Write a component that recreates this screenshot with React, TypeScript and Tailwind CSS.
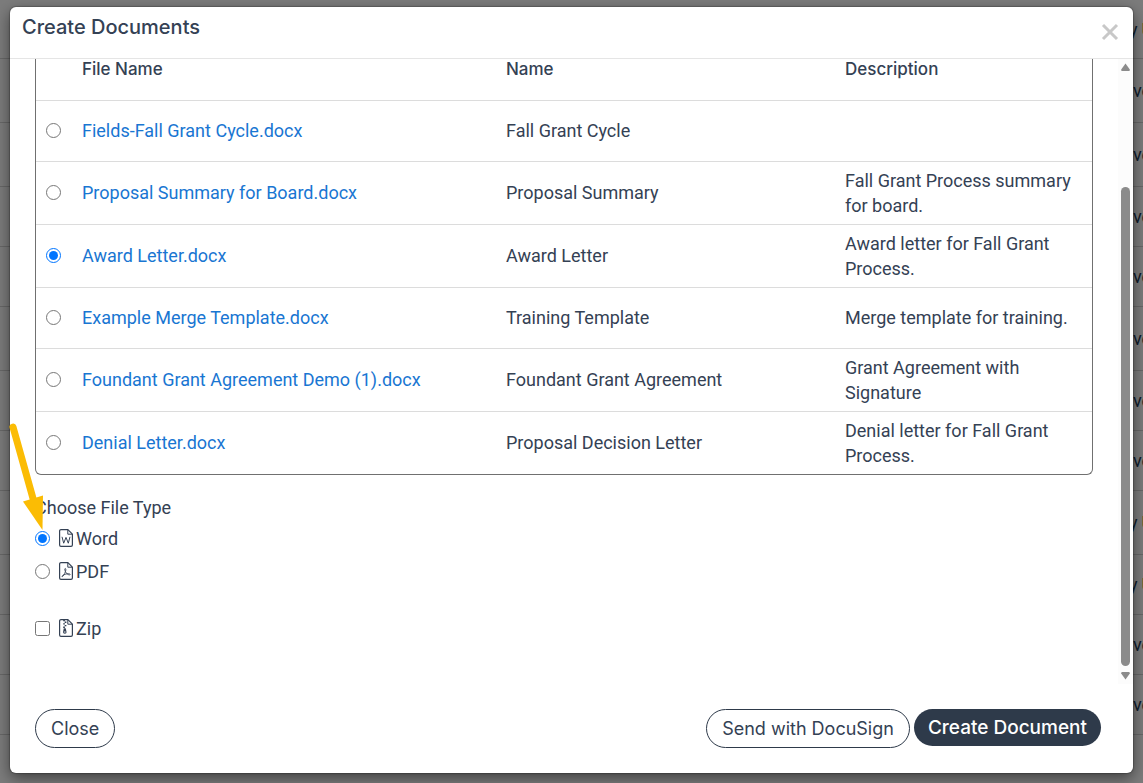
import { useState } from "react";

interface Template {
    id: number;
    file: string;
    name: string;
    description: string;
}

const templates: Template[] = [
    { id: 1, file: "Fields-Fall Grant Cycle.docx", name: "Fall Grant Cycle", description: "" },
    {
        id: 2,
        file: "Proposal Summary for Board.docx",
        name: "Proposal Summary",
        description: "Fall Grant Process summary for board.",
    },
    { id: 3, file: "Award Letter.docx", name: "Award Letter", description: "Award letter for Fall Grant Process." },
    {
        id: 4,
        file: "Example Merge Template.docx",
        name: "Training Template",
        description: "Merge template for training.",
    },
    {
        id: 5,
        file: "Foundant Grant Agreement Demo (1).docx",
        name: "Foundant Grant Agreement",
        description: "Grant Agreement with Signature",
    },
    {
        id: 6,
        file: "Denial Letter.docx",
        name: "Proposal Decision Letter",
        description: "Denial letter for Fall Grant Process.",
    },
];

const backgroundRows = [
    { text: "y", height: "h-[59px]" },
    { text: "ve", height: "h-[64px]" },
    { text: "ve", height: "h-[64px]" },
    { text: "ve", height: "h-[60px]" },
    { text: "ve", height: "h-[60px]" },
    { text: "ve", height: "h-[64px]" },
    { text: "ve", height: "h-[60px]" },
    { text: "ve", height: "h-[60px]" },
    { text: "y", height: "h-[64px]" },
    { text: "y", height: "h-[60px]" },
    { text: "ve", height: "h-[60px]" },
    { text: "ve", height: "h-[60px]" },
];

function FileIcon({ kind }: { kind: "word" | "pdf" | "zip" }) {
    return (
        <svg
            className="h-[18px] w-[14px] shrink-0"
            viewBox="0 0 14 18"
            fill="none"
            stroke="currentColor"
            strokeLinejoin="round"
            aria-hidden="true"
        >
            <path d="M2 .6h6.9l4.5 4.5V16a1.4 1.4 0 0 1-1.4 1.4H2A1.4 1.4 0 0 1 .6 16V2A1.4 1.4 0 0 1 2 .6Z" strokeWidth="1.2" />
            <path d="M8.8.8v4.4h4.4" strokeWidth="1" />
            {kind === "word" && <path d="m3 7.8 1.7 6.400L7 8.400l2.300 5.800L11 7.800" strokeWidth="1" />}
            {kind === "pdf" && (
                <path
                    d="M6.3 6.5c-.7.1-.7 1 .1 3 1 2 2.4 3.3 4 3.4 1.3 0 .9-1.3-.8-1.2-2.3.1-4.6.8-6.1 1.9-1 .8-.5 1.5.3.7 1.3-1.3 2.7-4.2 3-6.2.1-1-.1-1.6-.5-1.6Z"
                    strokeWidth="0.9"
                />
            )}
            {kind === "zip" && (
                <>
                    <path d="M4.2 1.5h1.7M5.7 3.2h1.7M4.2 4.9h1.7M5.7 6.6h1.7M4.2 8.3h1.7" strokeWidth="1.4" />
                    <path d="M4.8 9.3h1.9l.8 3.500c.2 1.200-.5 1.900-1.700 1.900S3.900 14 4.100 12.800Z" fill="currentColor" stroke="none" />
                    <path d="M5 13h1.600" stroke="#fff" strokeWidth="0.9" />
                </>
            )}
        </svg>
    );
}

function PointerArrow() {
    return (
        <svg className="pointer-events-none absolute left-[9px] top-[422px] h-[110px] w-[36px]" viewBox="0 0 36 110" aria-hidden="true">
            <path d="M4 5 25 80" stroke="#fbbc04" strokeWidth="7" strokeLinecap="round" />
            <path d="M14 79.5 34 73.5 33.5 108Z" fill="#fbbc04" />
        </svg>
    );
}

function Scrollbar() {
    return (
        <div className="flex w-[15px] shrink-0 flex-col items-center gap-1 bg-[#fcfcfc] py-1" aria-hidden="true">
            <svg className="h-2 w-[9px] shrink-0" viewBox="0 0 9 8">
                <path d="M4.5.5 8.8 6.5Q9 8 8 8H1Q0 8 .2 6.5Z" fill="#8b8b8b" />
            </svg>
            <div className="flex w-[9px] flex-1 flex-col">
                <div className="flex-[112]" />
                <div className="flex-[479] rounded-full bg-[#8b8b8b]" />
                <div className="flex-[2]" />
            </div>
            <svg className="h-2 w-[9px] shrink-0" viewBox="0 0 9 8">
                <path d="M4.5 7.5 8.8 1.5Q9 0 8 0H1Q0 0 .2 1.5Z" fill="#8b8b8b" />
            </svg>
        </div>
    );
}

function PageBehind() {
    return (
        <div className="absolute inset-0 overflow-hidden bg-[#7c7c7c]" aria-hidden="true">
            {backgroundRows.map((row, i) => (
                <div
                    key={i}
                    className={`flex items-center justify-end border-b border-[#686868] text-[#101b2b] ${row.height}`}
                >
                    {row.text === "y" ? (
                        <span className="flex w-[14px] gap-1 whitespace-nowrap">
                            y<span className="text-[#7a4310]">U</span>
                        </span>
                    ) : (
                        <span className="w-[10px] whitespace-nowrap">{row.text}</span>
                    )}
                </div>
            ))}
        </div>
    );
}

export default function App() {
    const [selected, setSelected] = useState(3);
    const [fileType, setFileType] = useState("word");
    const [zip, setZip] = useState(false);

    return (
        <div className="relative h-screen overflow-hidden px-[10px] pb-[10px] pt-[7px] font-[Roboto,sans-serif] text-lg leading-[25px] text-[#344154]">
            <PageBehind />
            <div
                role="dialog"
                aria-labelledby="dialog-title"
                className="relative flex h-full flex-col rounded-md bg-white shadow-[0_5px_15px_rgba(0,0,0,0.5),0_0_1px_1px_rgba(0,0,0,0.2)]"
            >
                <header className="flex h-[52px] shrink-0 items-start justify-between border-b border-[#e5e5e5] pl-3 pr-[14px]">
                    <h1 id="dialog-title" className="pt-2 font-[Inter,sans-serif] text-xl leading-[25px] font-medium">
                        Create Documents
                    </h1>
                    <button type="button" aria-label="Close dialog" className="mt-4 text-[#c8c8c8]">
                        <svg className="size-[18px]" viewBox="0 0 18 18" fill="none" stroke="currentColor" strokeWidth="3">
                            <path d="m2 2 14 14M16 2 2 16" />
                        </svg>
                    </button>
                </header>

                <div className="flex min-h-0 flex-1">
                    <div className="min-w-0 flex-1 overflow-hidden px-[25px]">
                        <div className="overflow-hidden rounded-b-md border border-t-0 border-[#707070]">
                            <table className="w-full table-fixed text-left">
                                <thead className="font-[Inter,sans-serif] text-[17px] leading-5">
                                    <tr className="h-[41px] border-b border-[#dcdcdc] align-top">
                                        <th className="w-9" aria-label="Select" />
                                        <th className="px-[10px] font-medium">File Name</th>
                                        <th className="w-[339px] px-[10px] font-medium">Name</th>
                                        <th className="w-[257px] px-[10px] font-medium">Description</th>
                                    </tr>
                                </thead>
                                <tbody>
                                    {templates.map((template) => (
                                        <tr key={template.id} className="h-[61px] border-b border-[#dcdcdc] last:border-b-0">
                                            <td className="pl-[10px]">
                                                <input
                                                    type="radio"
                                                    name="template"
                                                    aria-label={template.file}
                                                    className="block size-[15px]"
                                                    checked={selected === template.id}
                                                    onChange={() => setSelected(template.id)}
                                                />
                                            </td>
                                            <td className="px-[10px]">
                                                <a href="#" className="text-[#1976d2]">
                                                    {template.file}
                                                </a>
                                            </td>
                                            <td className="px-[10px]">{template.name}</td>
                                            <td className="px-[10px] py-[6px]">{template.description}</td>
                                        </tr>
                                    ))}
                                </tbody>
                            </table>
                        </div>

                        <fieldset className="mt-5">
                            <legend className="mb-[6px]">Choose File Type</legend>
                            <label className="mb-2 flex w-fit items-center">
                                <input
                                    type="radio"
                                    name="fileType"
                                    className="size-[15px]"
                                    checked={fileType === "word"}
                                    onChange={() => setFileType("word")}
                                />
                                <span className="ml-[9px] flex items-center gap-[3px]">
                                    <FileIcon kind="word" />
                                    Word
                                </span>
                            </label>
                            <label className="flex w-fit items-center">
                                <input
                                    type="radio"
                                    name="fileType"
                                    className="size-[15px]"
                                    checked={fileType === "pdf"}
                                    onChange={() => setFileType("pdf")}
                                />
                                <span className="ml-[9px] flex items-center gap-[3px]">
                                    <FileIcon kind="pdf" />
                                    PDF
                                </span>
                            </label>
                        </fieldset>
                        <label className="mt-8 flex w-fit items-center">
                            <input
                                type="checkbox"
                                className="size-[15px]"
                                checked={zip}
                                onChange={(e) => setZip(e.target.checked)}
                            />
                            <span className="ml-[9px] flex items-center gap-[3px]">
                                <FileIcon kind="zip" />
                                Zip
                            </span>
                        </label>
                    </div>
                    <Scrollbar />
                </div>

                <footer className="flex shrink-0 items-start justify-between px-[25px] py-[25px] font-[Inter,sans-serif]">
                    <button type="button" className="h-[39px] rounded-full border border-[#2e3a4a] px-[15px]">
                        Close
                    </button>
                    <div className="mr-[7px] flex items-start gap-1">
                        <button type="button" className="h-[39px] rounded-full border border-[#2e3a4a] px-[15px]">
                            Send with DocuSign
                        </button>
                        <button
                            type="button"
                            className="h-[37px] rounded-full bg-[#2e3a4a] px-[14px] text-[19px] font-medium text-white"
                        >
                            Create Document
                        </button>
                    </div>
                </footer>
            </div>
            <PointerArrow />
        </div>
    );
}
